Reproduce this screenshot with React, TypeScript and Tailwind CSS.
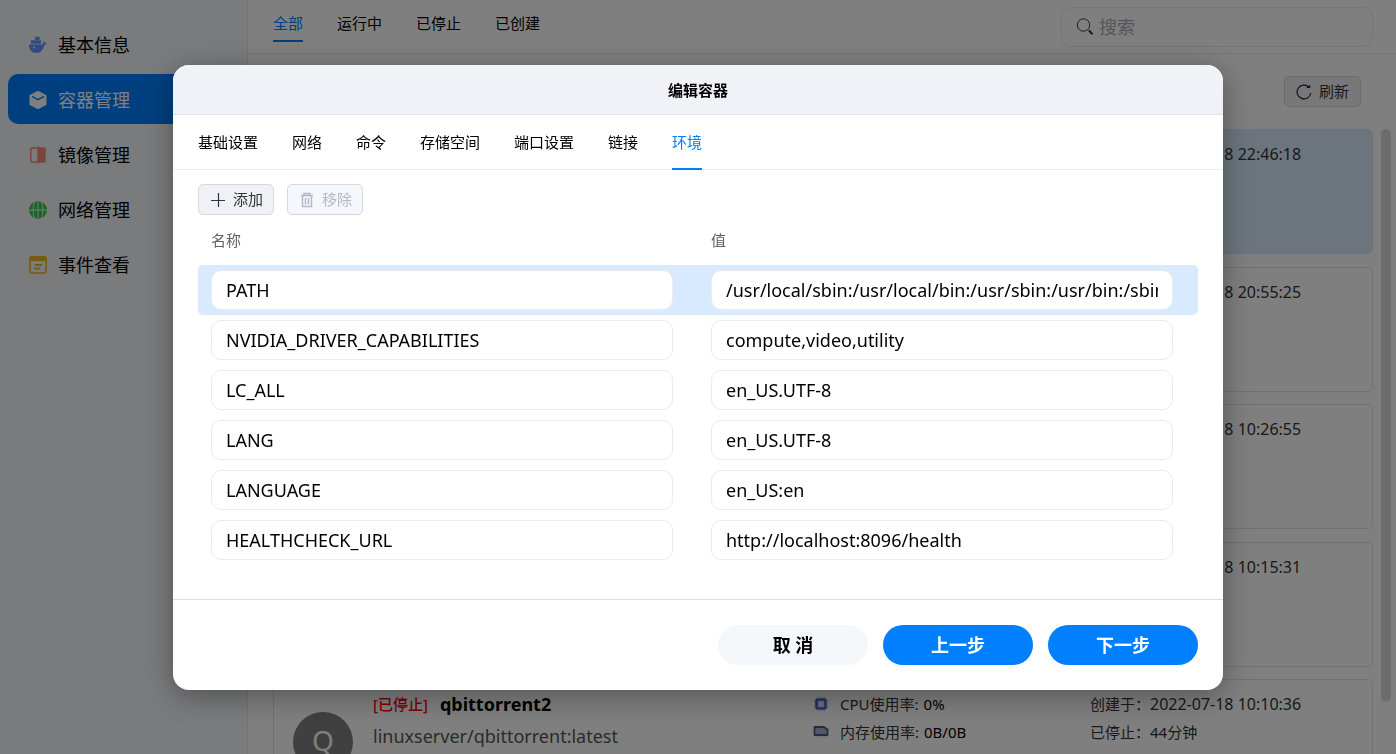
import type { ReactNode } from "react";

const FONT = "font-['Noto_Sans','Noto_Sans_CJK_SC',sans-serif]";

const WhaleIcon = () => (
  <svg viewBox="0 0 18 18" className="size-[18px] fill-[#6496ff]" aria-hidden="true">
    <path d="M6 .8h4.500V4H6zM2 4.300h10v3.500H2zM0 8.500h13c1.200-.2 1.500-1.600 1.200-3.500 1 .4 1.600 1.200 1.700 2 .8-.1 1.600.1 2.100.6-.6 1-1.500 1.300-2.600 1.400C14.300 13.800 11.500 17 7.200 17 2.500 17 0 14 0 8.500z" />
    <circle cx="5" cy="11.500" r="1" className="fill-[#f4f6fa]" />
  </svg>
);

const BoxIcon = () => (
  <svg viewBox="0 0 18 18" className="size-[18px]" aria-hidden="true">
    <path d="M8 .3a2 2 0 0 1 2 0l6.700 3.400a1.500 1.500 0 0 1 .8 1.300v8a1.500 1.500 0 0 1-.8 1.300L10 17.700a2 2 0 0 1-2 0l-6.700-3.400A1.500 1.500 0 0 1 .5 13V5a1.500 1.500 0 0 1 .8-1.300z" className="fill-white" />
    <path d="m3.500 5.700 5.500 3 5.500-3" className="fill-none stroke-[#007fff]" strokeWidth="1.500" strokeLinecap="round" strokeLinejoin="round" />
  </svg>
);

const MirrorIcon = () => (
  <svg viewBox="0 0 18 18" className="size-[18px]" aria-hidden="true">
    <path d="M9 2H3a1.300 1.300 0 0 0-1.300 1.300v11.400A1.300 1.300 0 0 0 3 16h6" className="fill-none stroke-[#f58b78]" strokeWidth="1.500" />
    <path d="M8.300.5h1.500v.700h5.400A1.500 1.500 0 0 1 16.700 2.700v12.600a1.500 1.500 0 0 1-1.500 1.500H9.800v.700H8.300z" className="fill-[#f58b78]" />
  </svg>
);

const GlobeIcon = () => (
  <svg viewBox="0 0 18 18" className="size-[18px]" aria-hidden="true">
    <circle cx="9" cy="9" r="9" className="fill-[#35c94c]" />
    <path d="M0 9h18M9 0v18M6 0C3.500 5.500 3.500 12.500 6 18M12 0c2.500 5.500 2.500 12.500 0 18" className="fill-none stroke-[#f4f6fa]" strokeWidth="1" />
  </svg>
);

const EventIcon = () => (
  <svg viewBox="0 0 18 18" className="size-[18px]" aria-hidden="true">
    <rect x="1" y="1" width="16" height="16" rx="1.500" className="fill-none stroke-[#f0b816]" strokeWidth="1.600" />
    <path d="M1.800.3h14.400A1.500 1.500 0 0 1 17.700 1.800V5H.3V1.800A1.500 1.500 0 0 1 1.800.3z" className="fill-[#f0b816]" />
    <path d="M6 9h7M5 12.500h6" className="stroke-[#f0b816]" strokeWidth="2" />
  </svg>
);

const SearchIcon = () => (
  <svg viewBox="0 0 18 18" className="size-[18px] fill-none stroke-[#3c3c3c]" aria-hidden="true">
    <circle cx="7.500" cy="7" r="6.200" strokeWidth="1" />
    <path d="m12.800 12.300 3.700 3.900" strokeWidth="2" />
  </svg>
);

const RefreshIcon = () => (
  <svg viewBox="0 0 16 16" className="size-4 fill-none stroke-[#222]" aria-hidden="true">
    <path d="M14.800 9A6.900 6.900 0 1 1 12.800 3" strokeWidth="1.200" />
    <path d="M10.300 4h3.900V.8z" className="fill-[#222] stroke-none" />
  </svg>
);

const PlusIcon = () => (
  <svg viewBox="0 0 14 14" className="size-[14px] fill-none stroke-[#303048]" aria-hidden="true">
    <path d="M0 7.500h14M7.500 0v14" strokeWidth="1.200" />
  </svg>
);

const TrashIcon = () => (
  <svg viewBox="0 0 14 16" className="h-4 w-[14px] fill-none stroke-[#b4b9c8]" aria-hidden="true">
    <path d="M1 3.500h12M4 3V1.500h6V3M2.500 4v10.500h9V4M5.500 6v6.500M8.500 6v6.500" strokeWidth="1.500" />
  </svg>
);

const CpuIcon = () => (
  <svg viewBox="0 0 16 16" className="size-4" aria-hidden="true">
    <rect x="3.500" y="3.500" width="9" height="9" rx="1" className="fill-[#c4cdfa] stroke-[#4a62c8]" strokeWidth="2.600" />
    <rect x="6.500" y="6.500" width="3" height="3" className="fill-[#dfe5ff]" />
    <path d="M5 .8v1.500M8 .8v1.500M11 .8v1.500M5 13.700v1.500M8 13.700v1.500M11 13.700v1.500M.8 5h1.500M.8 8h1.500M.8 11h1.500M13.700 5h1.500M13.700 8h1.500M13.700 11h1.500" className="stroke-[#a9b5ea]" />
  </svg>
);

const MemoryIcon = () => (
  <svg viewBox="0 0 16 16" className="size-4" aria-hidden="true">
    <path d="M1.500 3h9.500L14.500 5.500V11h-13z" className="fill-[#a9aed4] stroke-[#50557f]" strokeWidth="1.800" strokeLinejoin="round" />
    <path d="M3 13h11" className="stroke-[#b9bdd8]" strokeDasharray="1 1" />
  </svg>
);

const navItems: { label: string; icon: ReactNode }[] = [
  { label: "基本信息", icon: <WhaleIcon /> },
  { label: "容器管理", icon: <BoxIcon /> },
  { label: "镜像管理", icon: <MirrorIcon /> },
  { label: "网络管理", icon: <GlobeIcon /> },
  { label: "事件查看", icon: <EventIcon /> },
];

const filters = ["全部", "运行中", "已停止", "已创建"];
const tabs = ["基础设置", "网络", "命令", "存储空间", "端口设置", "链接", "环境"];

const containers = [
  { created: "2022-07-18 22:46:18" },
  { created: "2022-07-18 20:55:25" },
  { created: "2022-07-18 10:26:55" },
  { created: "2022-07-18 10:15:31" },
  { created: "2022-07-18 10:10:36", name: "qbittorrent2", image: "linuxserver/qbittorrent:latest" },
];

const variables = [
  ["PATH", "/usr/local/sbin:/usr/local/bin:/usr/sbin:/usr/bin:/sbin:/bin"],
  ["NVIDIA_DRIVER_CAPABILITIES", "compute,video,utility"],
  ["LC_ALL", "en_US.UTF-8"],
  ["LANG", "en_US.UTF-8"],
  ["LANGUAGE", "en_US:en"],
  ["HEALTHCHECK_URL", "http://localhost:8096/health"],
];

function Sidebar() {
  return (
    <nav className="flex w-[248px] shrink-0 flex-col gap-[5px] border-r border-[#e8e8ec] bg-[#f4f6fa] px-2 pt-[19px]">
      {navItems.map((item, i) => (
        <a
          key={item.label}
          href="#"
          className={`flex h-[50px] items-center gap-[11px] rounded-[10px] pl-[21px] pt-0.5 text-[18px] ${i === 1 ? "bg-[#007fff] text-white" : "text-black"}`}
        >
          {item.icon}
          {item.label}
        </a>
      ))}
    </nav>
  );
}

function ContainerCard({ created, name, image, selected }: { created: string; name?: string; image?: string; selected: boolean }) {
  return (
    <article
      className={`flex h-[125px] shrink-0 rounded-[5px] border pl-[19px] text-[15px] leading-[28px] text-[#333] odd:mb-[13px] even:mb-3 ${selected ? "border-[#d8e9f9] bg-[#d8ebfc]" : "border-[#e3e3e3] bg-white"}`}
    >
      {name && (
        <>
          <div className="mt-8 flex size-[60px] shrink-0 items-center justify-center rounded-full bg-[#808080] pb-1 text-[28px] text-white">
            {name[0].toUpperCase()}
          </div>
          <div className="ml-5 flex-1 pt-[9px]">
            <h3 className="flex items-center gap-3 leading-[30px]">
              <span className="font-medium text-[#f00]">[已停止]</span>
              <span className="text-[18px] font-bold text-black">{name}</span>
            </h3>
            <p className="text-[18px] leading-[34px] text-[#555]">{image}</p>
          </div>
          <div className="w-[277px] pt-[10px]">
            <p className="flex items-center gap-[5px]">
              <CpuIcon />
              <span className="ml-[6px]">CPU使用率:</span>
              <span className="text-black">0%</span>
            </p>
            <p className="flex items-center gap-[5px]">
              <MemoryIcon />
              <span className="ml-[6px]">内存使用率:</span>
              <span className="text-black">0B/0B</span>
            </p>
          </div>
        </>
      )}
      <dl className="ml-auto grid w-[282px] grid-cols-[60px_1fr] content-start pt-[10px]">
        <dt className="whitespace-nowrap">创建于：</dt>
        <dd className="text-[16px]">{created}</dd>
        {name && (
          <>
            <dt className="whitespace-nowrap">已停止：</dt>
            <dd>44分钟</dd>
          </>
        )}
      </dl>
    </article>
  );
}

function MainArea() {
  return (
    <main className="flex min-w-0 flex-1 flex-col bg-white">
      <header className="flex h-[54px] shrink-0 items-start justify-between border-b border-[#ebebeb] pl-[25px] pr-[23px]">
        <div className="flex gap-[34px] pt-[5px]">
          {filters.map((f, i) => (
            <button
              key={f}
              className={`h-[37px] border-b-2 pt-0.5 text-[15px] ${i === 0 ? "border-[#007fff] text-[#007fff]" : "border-transparent text-black"}`}
            >
              {f}
            </button>
          ))}
        </div>
        <label className="mt-[7px] flex h-10 w-[312px] items-center gap-[5px] rounded-[10px] border border-[#ebebeb] px-[14px]">
          <SearchIcon />
          <input aria-label="搜索" placeholder="搜索" className="min-w-0 flex-1 bg-transparent text-[18px] outline-none placeholder:text-[#a8abb5]" />
        </label>
      </header>
      <div className="flex h-[75px] shrink-0 items-center justify-end pr-[35px]">
        <button className="flex h-[31px] w-[77px] items-center justify-center gap-[7px] rounded-[5px] border border-[#d8d8d8] bg-[#f0f1f6] text-[15px] text-[#333]">
          <RefreshIcon />
          刷新
        </button>
      </div>
      <div className="flex min-h-0 flex-1">
        <div className="ml-[25px] flex min-w-0 flex-1 flex-col overflow-hidden">
          {containers.map((c, i) => (
            <ContainerCard key={c.created} {...c} selected={i === 0} />
          ))}
        </div>
        <div className="ml-2 mr-[5px] w-[10px]">
          <div className="h-11/12 rounded-full bg-[#dadada]" />
        </div>
      </div>
    </main>
  );
}

function EditDialog() {
  return (
    <section
      role="dialog"
      aria-modal="true"
      aria-labelledby="dialog-title"
      className="flex w-[1050px] max-w-full flex-col overflow-hidden rounded-[16px] bg-white shadow-[0_6px_30px_rgba(0,0,0,0.35)]"
    >
      <h2 id="dialog-title" className="flex h-[50px] items-center justify-center border-b border-[#e3e4ea] bg-[#f1f2f8] pt-0.5 text-[15px] font-bold text-black">
        编辑容器
      </h2>
      <div role="tablist" className="flex h-[55px] gap-[34px] border-b border-[#ededed] px-[25px]">
        {tabs.map((t) => (
          <button
            key={t}
            role="tab"
            aria-selected={t === "环境"}
            className="-mb-px border-b-2 border-transparent pt-0.5 text-[15px] text-black aria-selected:border-[#007fff] aria-selected:text-[#007fff]"
          >
            {t}
          </button>
        ))}
      </div>
      <div className="px-[25px] pb-[34px] pt-[14px]">
        <div className="flex gap-[13px]">
          <button className="flex h-[31px] w-[76px] items-center justify-center gap-2 rounded-[5px] border border-[#d8d8d8] bg-[#f0f1f6] pl-0.5 text-[15px] text-[#333]">
            <PlusIcon />
            添加
          </button>
          <button disabled className="flex h-[31px] w-[76px] items-center justify-center gap-2 rounded-[5px] border border-[#d8d8d8] bg-[#f4f8fc] pl-0.5 text-[15px] text-[#b4b9c8]">
            <TrashIcon />
            移除
          </button>
        </div>
        <table className="w-full table-fixed border-separate border-spacing-0">
          <thead>
            <tr className="h-[50px] text-left text-[15px] text-[#606060]">
              <th className="px-[13px] font-normal">名称</th>
              <th className="px-[13px] font-normal">值</th>
            </tr>
          </thead>
          <tbody>
            {variables.map((row, i) => (
              <tr key={row[0]} className={`h-[50px] ${i === 0 ? "bg-[#d8eaff]" : ""}`}>
                {row.map((value, col) => (
                  <td key={col} className="p-0 pl-[13px] pr-[25px] first:rounded-l-[5px] last:rounded-r-[5px]">
                    <input
                      aria-label={col === 0 ? "名称" : "值"}
                      defaultValue={value}
                      className="block h-10 w-full rounded-[10px] border border-[#ebebeb] bg-white px-[14px] text-[18px] text-black outline-none"
                    />
                  </td>
                ))}
              </tr>
            ))}
          </tbody>
        </table>
      </div>
      <footer className="flex h-[91px] items-center justify-end gap-[15px] border-t border-[#dcdcdc] px-[25px]">
        <button className="h-10 w-[150px] rounded-full bg-[#f4f8fb] text-[18px] font-bold text-black">取 消</button>
        <button className="h-10 w-[150px] rounded-full bg-[#007fff] text-[18px] font-bold text-white">上一步</button>
        <button className="h-10 w-[150px] rounded-full bg-[#007fff] text-[18px] font-bold text-white">下一步</button>
      </footer>
    </section>
  );
}

export default function App() {
  return (
    <div className={`flex h-screen overflow-hidden ${FONT}`}>
      <Sidebar />
      <MainArea />
      <div className="fixed inset-0 flex items-center justify-center bg-black/50 pt-px">
        <EditDialog />
      </div>
    </div>
  );
}
